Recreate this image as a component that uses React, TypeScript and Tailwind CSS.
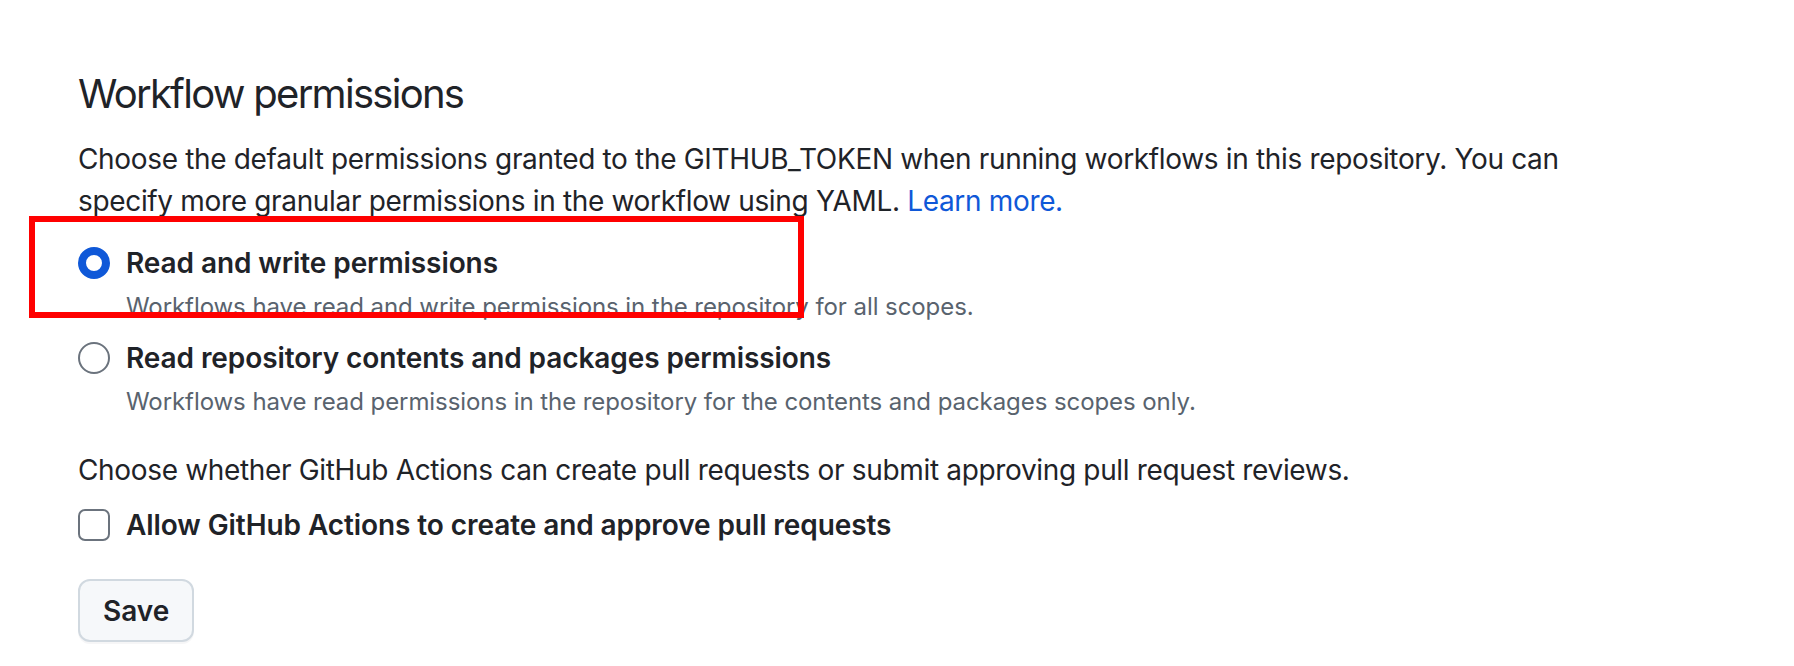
import { ReactNode } from "react";

const font = { fontFamily: "Inter, 'Noto Sans', sans-serif" };

interface RadioRowProps {
  checked?: boolean;
  label: string;
  hint: string;
  children?: ReactNode;
}

const RadioRow = ({ checked, label, hint, children }: RadioRowProps) => {
  return (
    <div className="relative">
      {children}
      <label className="flex items-start">
        {checked ? (
          <span className="mt-[5px] w-8 h-8 shrink-0 rounded-full border-[8px] border-[#0f58d8] bg-white" />
        ) : (
          <span className="mt-[5px] w-8 h-8 shrink-0 rounded-full border-2 border-[#6b737d] bg-white" />
        )}
        <span className="ml-4 text-[28px] leading-[42px] font-semibold tracking-[-0.003em] text-[#1f2328]">{label}</span>
      </label>
      <p className="ml-12 mt-[5px] text-[24px] leading-[36px] tracking-[-0.003em] text-[#59636e]">{hint}</p>
    </div>
  );
};

const App = () => {
  return (
    <div className="w-[1794px] h-[666px] overflow-hidden bg-white pl-[78px] pt-[64px]" style={font}>
      {/* Heading */}
      <h2 className="text-[40px] leading-[60px] font-normal tracking-[-0.043em] text-[#1f2328]">Workflow permissions</h2>

      <p className="mt-[14px] w-[1520px] text-[28px] leading-[42px] tracking-[-0.012em] text-[#1f2328]">
        Choose the default permissions granted to the GITHUB_TOKEN when running workflows in this repository. You can
        specify more granular permissions in the workflow using YAML.{" "}
        <a href="#" className="text-[#0f58d8]">
          Learn more.
        </a>
      </p>

      {/* Permission options */}
      <div className="mt-[20px]">
        <RadioRow
          checked
          label="Read and write permissions"
          hint="Workflows have read and write permissions in the repository for all scopes."
        >
          <div className="absolute pointer-events-none -left-[49px] -top-[26px] w-[775px] h-[102px] border-[6px] border-[#ff0000] z-10" />
        </RadioRow>
        <div className="mt-[12px]">
          <RadioRow
            label="Read repository contents and packages permissions"
            hint="Workflows have read permissions in the repository for the contents and packages scopes only."
          />
        </div>
      </div>

      <p className="mt-[29px] text-[28px] leading-[42px] tracking-[-0.012em] text-[#1f2328]">
        Choose whether GitHub Actions can create pull requests or submit approving pull request reviews.
      </p>

      <label className="mt-[13px] flex items-start">
        <span className="mt-[5px] w-8 h-8 shrink-0 rounded-[7px] border-2 border-[#6b737d] bg-white" />
        <span className="ml-4 text-[28px] leading-[42px] font-semibold tracking-[-0.003em] text-[#1f2328]">
          Allow GitHub Actions to create and approve pull requests
        </span>
      </label>

      <button className="mt-[33px] h-[63px] px-[23px] rounded-[12px] border-2 border-[#d1d9e0] bg-[#f6f8fa] shadow-[0_2px_0_rgba(31,35,40,0.04)] text-[28px] font-semibold text-[#1f2328]">
        Save
      </button>
    </div>
  );
};

export default App;
